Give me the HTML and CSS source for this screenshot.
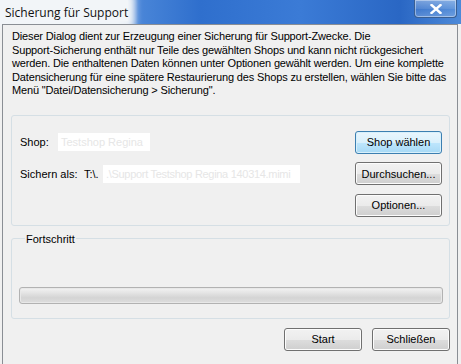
FILE: index.html
```html
<!DOCTYPE html>
<html lang="de">
<head>
<meta charset="utf-8">
<title>Sicherung für Support</title>
<link rel="stylesheet" href="styles.css">
</head>
<body>
<div class="window">
  <div class="titlebar">
    <span class="title">Sicherung für Support</span>
    <div class="close"><svg width="12" height="10" viewBox="0 0 12 10"><path d="M1.5 1 L10.5 9 M10.5 1 L1.5 9" stroke="#fff" stroke-width="2.4" stroke-linecap="square"/></svg></div>
  </div>
  <div class="client">
    <p class="intro">Dieser Dialog dient zur Erzeugung einer Sicherung für Support-Zwecke. Die<br>Support-Sicherung enthält nur Teile des gewählten Shops und kann nicht rückgesichert<br>werden. Die enthaltenen Daten können unter Optionen gewählt werden. Um eine komplette<br>Datensicherung für eine spätere Restaurierung des Shops zu erstellen, wählen Sie bitte das<br>Menü "Datei/Datensicherung &gt; Sicherung".</p>
    <div class="group settings">
      <div class="row">
        <div class="fields">
          <span class="label shop-label">Shop:</span>
          <span class="field shop-field">Testshop Regina</span>
        </div>
        <button class="btn default">Shop wählen</button>
      </div>
      <div class="row">
        <div class="fields">
          <span class="label save-label">Sichern als:</span>
          <span class="prefix">T:\.</span>
          <span class="field path-field">.\Support Testshop Regina 140314.mimi</span>
        </div>
        <button class="btn">Durchsuchen...</button>
      </div>
      <div class="row">
        <div class="fields"></div>
        <button class="btn">Optionen...</button>
      </div>
    </div>
    <fieldset class="group progress-group">
      <legend>Fortschritt</legend>
      <div class="progress"></div>
    </fieldset>
    <div class="footer">
      <button class="btn small">Start</button>
      <button class="btn small">Schließen</button>
    </div>
  </div>
</div>
</body>
</html>
```
FILE: styles.css
```css
* { box-sizing: border-box; }
html, body { margin: 0; padding: 0; }
body {
  width: 461px;
  height: 364px;
  overflow: hidden;
  background: #f0f0f0;
  font-family: "Liberation Sans", Arial, sans-serif;
  font-size: 11px;
  color: #000;
}
.window {
  width: 461px;
  height: 364px;
  display: flex;
  flex-direction: column;
}
.titlebar {
  height: 24px;
  display: flex;
  align-items: flex-start;
  justify-content: space-between;
  background: linear-gradient(to right, #f3f5f8 0, #eef2f6 118px, #c9d9ee 128px, #4a86d8 138px, #2f6fcd 200px, #3b7bd6 300px, #2a67c4 400px, #4d8ad9 461px);
}
.title {
  font-family: "Open Sans", "Noto Sans", sans-serif;
  font-size: 12px;
  padding: 4px 0 0 5px;
  color: #111;
  background: #f2f5f8;
  box-shadow: 0 0 8px 6px #f2f5f8;
}
.close {
  width: 43px;
  height: 18px;
  margin-right: 4px;
  border: 1px solid #3a5f92;
  border-top: none;
  border-radius: 0 0 4px 4px;
  background: linear-gradient(to bottom, rgba(255,255,255,0.35), rgba(255,255,255,0.15) 50%, rgba(255,255,255,0.05) 51%, rgba(255,255,255,0.2));
  box-shadow: inset 0 0 0 1px rgba(255,255,255,0.4);
  display: flex;
  align-items: center;
  justify-content: center;
}
.client {
  flex: 1;
  margin: 0 3px 0 2px;
  border: 1px solid #8a8e94;
  border-bottom: none;
  background: #f0f0f0;
  display: flex;
  flex-direction: column;
}
.intro {
  margin: 0;
  padding: 5px 0 0 9px;
  line-height: 13.5px;
  white-space: nowrap;
  letter-spacing: -0.15px;
}
.group {
  margin: 17px 7px 0 8px;
  border: 1px solid #d5dfe5;
  border-radius: 3px;
}
.settings {
  height: 111px;
  padding: 15px 7px 0 8px;
  display: flex;
  flex-direction: column;
  gap: 8.5px;
}
.row {
  display: flex;
  align-items: center;
  height: 23px;
}
.fields {
  flex: 1;
  display: flex;
  align-items: center;
}
.label { display: inline-block; }
.shop-label { width: 38px; }
.save-label { width: 64px; }
.prefix { width: 19px; }
.field {
  background: #fff;
  color: #e6e6e6;
  height: 18px;
  line-height: 18px;
  padding: 0 3px;
  white-space: nowrap;
  overflow: hidden;
}
.shop-field { width: 92px; }
.path-field { width: 197px; letter-spacing: -0.3px; }
.btn {
  font-family: "Liberation Sans", Arial, sans-serif;
  font-size: 11px;
  color: #000;
  width: 87px;
  height: 23px;
  padding: 0;
  border: 1px solid #707070;
  border-radius: 3px;
  background: linear-gradient(to bottom, #f2f2f2 0, #ebebeb 50%, #dddddd 51%, #cfcfcf 100%);
  box-shadow: inset 0 0 0 1px #fcfcfc;
}
.btn.default {
  border-color: #3c7fb1;
  background: linear-gradient(to bottom, #eaf6fd 0, #d9f0fc 50%, #bee6fd 51%, #a7d9f5 100%);
  box-shadow: inset 0 0 0 1px #d8f0fb;
}
.progress-group {
  margin-top: 6px;
  padding: 0 6px 0 7px;
  height: 87px;
  min-width: 0;
}
.progress-group legend {
  padding: 0 1px;
  margin-left: 6px;
  line-height: 14px;
}
.progress {
  margin-top: 41px;
  height: 17px;
  border: 1px solid #b2b2b2;
  border-radius: 3px;
  background: linear-gradient(to bottom, #f3f3f3 0, #e3e3e3 35%, #d4d4d4 65%, #dedede 100%);
  box-shadow: inset 0 0 0 1px #e8e8e8;
}
.footer {
  display: flex;
  justify-content: flex-end;
  gap: 10px;
  margin: 9px 7px 0 0;
}
.btn.small { width: 78px; }
```
